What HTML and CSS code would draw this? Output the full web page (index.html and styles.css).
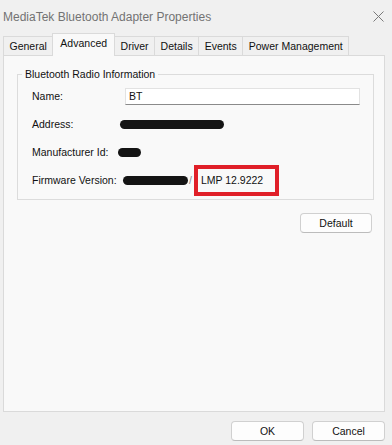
FILE: index.html
```html
<!DOCTYPE html>
<html lang="en">
<head>
  <meta charset="UTF-8">
  <title>MediaTek Bluetooth Adapter Properties</title>
  <link rel="stylesheet" href="styles.css">
</head>
<body>
  <div class="dialog">
    <div class="titlebar">
      <span class="title">MediaTek Bluetooth Adapter Properties</span>
      <svg class="close-icon" width="11" height="11" viewBox="0 0 11 11">
        <path d="M0.5 0.5 L10.5 10.5 M10.5 0.5 L0.5 10.5" stroke="#7a7a7a" stroke-width="1" fill="none"/>
      </svg>
    </div>

    <div class="tabs">
      <div class="tab">General</div>
      <div class="tab active">Advanced</div>
      <div class="tab">Driver</div>
      <div class="tab">Details</div>
      <div class="tab">Events</div>
      <div class="tab">Power Management</div>
    </div>

    <div class="page">
      <fieldset class="group">
        <legend>Bluetooth Radio Information</legend>
        <div class="row">
          <span class="field-label">Name:</span>
          <input class="name-input" type="text" value="BT">
        </div>
        <div class="row">
          <span class="field-label">Address:</span>
          <span class="redacted addr"></span>
        </div>
        <div class="row">
          <span class="field-label">Manufacturer Id:</span>
          <span class="redacted mfr"></span>
        </div>
        <div class="row">
          <span class="field-label">Firmware Version:</span>
          <span class="redacted fw"></span>
          <span class="slash">/</span>
          <span class="highlight">LMP 12.9222</span>
        </div>
      </fieldset>
      <div class="page-actions">
        <button class="btn">Default</button>
      </div>
    </div>

    <div class="footer">
      <button class="btn">OK</button>
      <button class="btn">Cancel</button>
    </div>
  </div>
</body>
</html>
```

FILE: styles.css
```css
body {
  margin: 0;
  background: #f0f0f0;
  font-family: "Liberation Sans", Arial, sans-serif;
  font-size: 10.5px;
  color: #111;
}
.dialog {
  width: 392px;
  height: 445px;
  overflow: hidden;
}
.titlebar {
  height: 30px;
  padding: 4px 8px 0 3px;
  display: flex;
  justify-content: space-between;
  align-items: center;
  box-sizing: border-box;
}
.title {
  font-size: 12px;
  color: #737373;
  line-height: 18px;
}
.close-icon {
  margin-top: -2px;
}
.tabs {
  display: flex;
  align-items: flex-end;
  height: 25px;
  padding-left: 3px;
  position: relative;
  z-index: 1;
}
.tab {
  height: 18px;
  line-height: 18px;
  padding: 0 5.5px;
  border: 1px solid #dadada;
  border-bottom: none;
  border-left: none;
  background: #f0f0f0;
}
.tab:first-child {
  border-left: 1px solid #dadada;
}
.tab.active {
  height: 22px;
  line-height: 19px;
  margin-bottom: -1px;
  background: #f9f9f9;
  border-left: 1px solid #dadada;
  margin-left: -1px;
  padding: 0 7px;
}
.page {
  margin: 0 7px 0 3px;
  height: 357px;
  box-sizing: border-box;
  background: #f9f9f9;
  border: 1px solid #dadada;
  padding: 11px 12px 0 13px;
}
.group {
  margin: 0;
  padding: 1px 13px 5px 14px;
  border: 1px solid #dcdcdc;
}
.group legend {
  margin-left: -10px;
  padding: 0 3px;
  line-height: 14px;
}
.row {
  display: flex;
  align-items: center;
  height: 28px;
}
.field-label {
  width: 88px;
  flex-shrink: 0;
}
.name-input {
  margin-left: 5px;
  width: 235px;
  height: 17px;
  box-sizing: border-box;
  border: 1px solid #e2e2e2;
  border-bottom-color: #8a8a8a;
  background: #fff;
  font: inherit;
  padding: 0 3px;
  color: #111;
}
.redacted {
  display: inline-block;
  height: 9px;
  background: #141414;
  border-radius: 5px;
}
.addr {
  width: 104px;
}
.mfr {
  width: 23px;
  margin-left: -2px;
}
.fw {
  width: 65px;
  margin-left: 3px;
}
.slash {
  color: #888;
  margin: 0 2px 0 1px;
}
.highlight {
  border: 4px solid #e01f28;
  height: 31px;
  box-sizing: border-box;
  padding: 0 12px 0 3px;
  display: flex;
  align-items: center;
}
.page-actions {
  display: flex;
  justify-content: flex-end;
  margin-top: 13px;
}
.btn {
  width: 72px;
  height: 20px;
  background: #fdfdfd;
  border: 1px solid #d0d0d0;
  border-bottom-color: #bcbcbc;
  border-radius: 4px;
  font: inherit;
  color: #111;
  padding: 0;
}
.footer {
  display: flex;
  justify-content: flex-end;
  gap: 8px;
  padding: 9px 7px 0 0;
}
.footer .btn {
  width: 73px;
}
```
